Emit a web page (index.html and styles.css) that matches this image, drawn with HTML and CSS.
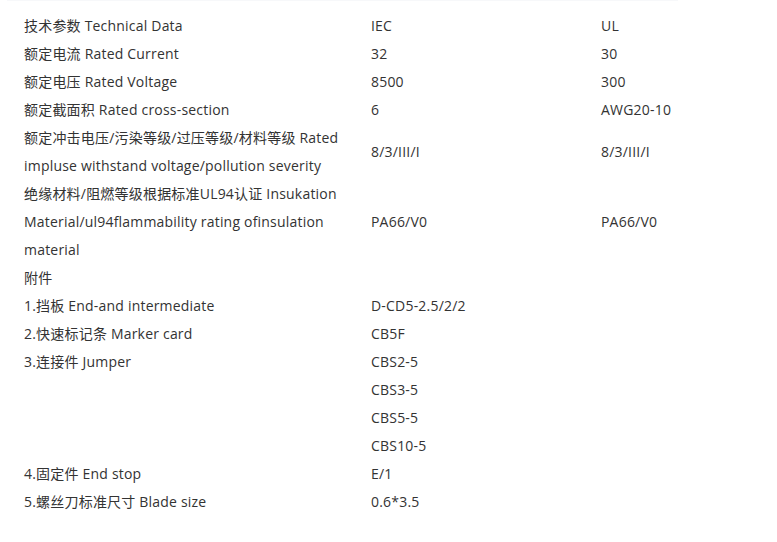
FILE: index.html
```html
<!DOCTYPE html>
<html lang="zh-CN">
<head>
<meta charset="utf-8">
<title>Technical Data</title>
<link rel="stylesheet" href="styles.css">
</head>
<body>
<div class="page">
  <table class="spec">
    <colgroup>
      <col class="c1"><col class="c2"><col class="c3">
    </colgroup>
    <tbody>
      <tr><td>技术参数 Technical Data</td><td>IEC</td><td>UL</td></tr>
      <tr><td>额定电流 Rated Current</td><td>32</td><td>30</td></tr>
      <tr><td>额定电压 Rated Voltage</td><td>8500</td><td>300</td></tr>
      <tr><td>额定截面积 Rated cross-section</td><td>6</td><td>AWG20-10</td></tr>
      <tr><td>额定冲击电压/污染等级/过压等级/材料等级 Rated impluse withstand voltage/pollution severity</td><td>8/3/III/I</td><td>8/3/III/I</td></tr>
      <tr><td>绝缘材料/阻燃等级根据标准UL94认证 Insukation Material/ul94flammability rating ofinsulation material</td><td>PA66/V0</td><td>PA66/V0</td></tr>
      <tr><td>附件</td><td></td><td></td></tr>
      <tr><td>1.挡板 End-and intermediate</td><td>D-CD5-2.5/2/2</td><td></td></tr>
      <tr><td>2.快速标记条 Marker card</td><td>CB5F</td><td></td></tr>
      <tr><td>3.连接件 Jumper</td><td>CBS2-5</td><td></td></tr>
      <tr><td></td><td>CBS3-5</td><td></td></tr>
      <tr><td></td><td>CBS5-5</td><td></td></tr>
      <tr><td></td><td>CBS10-5</td><td></td></tr>
      <tr><td>4.固定件 End stop</td><td>E/1</td><td></td></tr>
      <tr><td>5.螺丝刀标准尺寸 Blade size</td><td>0.6*3.5</td><td></td></tr>
    </tbody>
  </table>
</div>
</body>
</html>
```

FILE: styles.css
```css
html, body {
  margin: 0;
  padding: 0;
  background: #ffffff;
}

.page {
  margin-left: 7px;
  width: 654px;
  border-top: 1px solid #f7f8fa;
  padding: 11px 0 0 17px;
  font-family: "Open Sans", "Noto Sans CJK SC", sans-serif;
  font-size: 14px;
  letter-spacing: 0.2px;
  color: #333333;
}

.spec {
  border-collapse: collapse;
  table-layout: fixed;
  width: 753px;
}

.spec col.c1 { width: 347px; }
.spec col.c2 { width: 230px; }
.spec col.c3 { width: 176px; }

.spec td {
  padding: 0 3px 0 0;
  line-height: 28px;
  vertical-align: middle;
  text-align: left;
  white-space: normal;
}
```
